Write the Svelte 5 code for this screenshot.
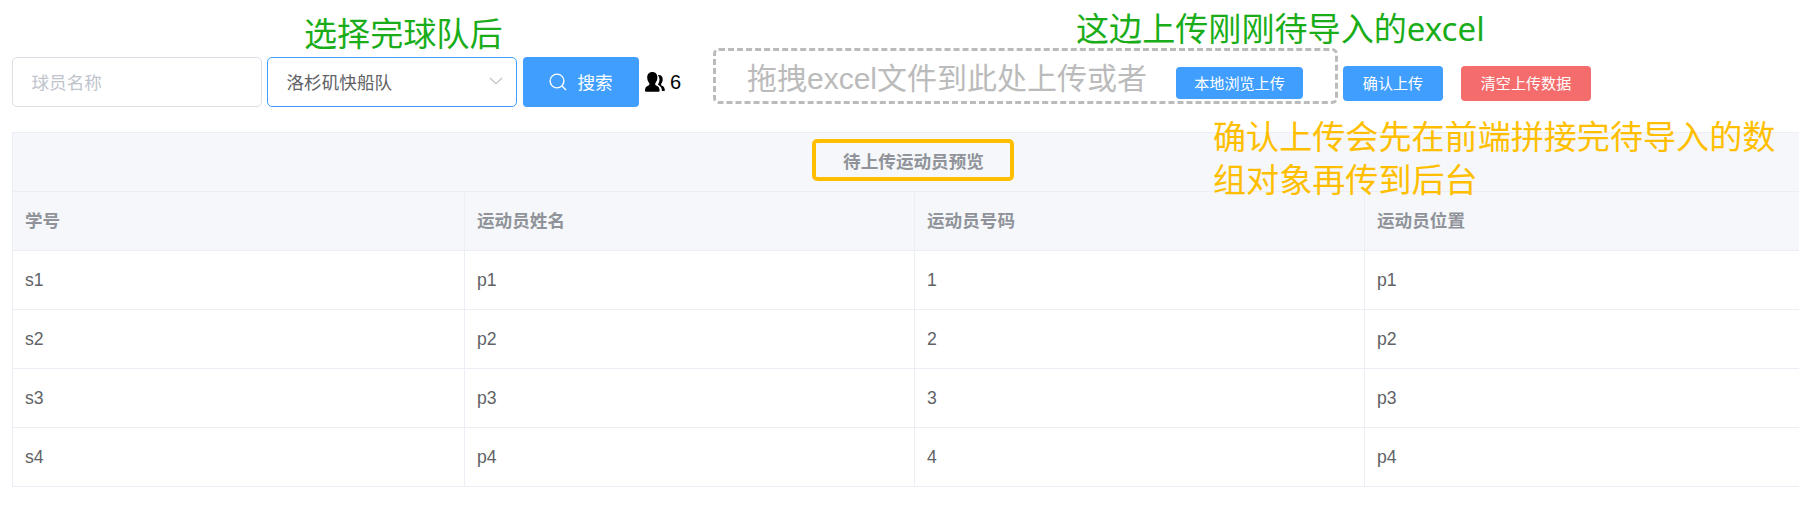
<script>
  const columns = ['学号', '运动员姓名', '运动员号码', '运动员位置'];
  const rows = [
    ['s1', 'p1', '1', 'p1'],
    ['s2', 'p2', '2', 'p2'],
    ['s3', 'p3', '3', 'p3'],
    ['s4', 'p4', '4', 'p4']
  ];
</script>

<main>
  <div class="toolbar">
    <div class="field placeholder"><span>球员名称</span></div>
    <div class="field select">
      <span>洛杉矶快船队</span>
      <svg width="14" height="8" viewBox="0 0 14 8"><path d="M1 1l6 5.700L13 1" fill="none" stroke="#c0c4cc" stroke-width="1.3" /></svg>
    </div>
    <button class="search">
      <svg width="18" height="18" viewBox="0 0 18 18" fill="none" stroke="#fff" stroke-width="1.4"><circle cx="8" cy="8" r="6.9" /><path d="M13 13l4 4" /></svg>
      <span>搜索</span>
    </button>
    <svg class="people" width="20" height="20" viewBox="0 0 20 20">
      <path d="M13 3.200c2.900-.5 4.700 1.400 4.700 4.300 0 1.900-.8 3.200-1.500 4.200-.4 1 0 1.500 1 2.100 2 1.100 2.600 2.300 2.600 5.200h-2.900c0-3-1-4.600-3.200-5.700-.7-.4-.8-.9-.4-1.600 1.600-2.600 1.700-6.200-.3-8.500z" />
      <path stroke="#fff" stroke-width="1" paint-order="stroke" d="M7.300 0c3.200 0 5.100 2.200 5.100 5.500 0 2.600-1 4.300-2.100 5.700-.5 1.200.1 1.900 1.300 2.500 2.200 1 3 2.300 3 4.900 0 .8-.3 1.200-1 1.200H1c-.7 0-1-.4-1-1.200 0-2.600.8-3.900 3-4.900 1.200-.6 1.800-1.300 1.300-2.500C3.200 9.800 2.200 8.100 2.200 5.500 2.200 2.200 4.100 0 7.300 0z" />
    </svg>
    <span class="count">6</span>
    <div class="drop">
      <span>拖拽excel文件到此处上传或者</span>
      <button class="small local">本地浏览上传</button>
    </div>
    <button class="small confirm">确认上传</button>
    <button class="small danger">清空上传数据</button>
  </div>

  <div class="table">
    <div class="title">待上传运动员预览</div>
    {#each columns as column}<div class="cell head">{column}</div>{/each}
    {#each rows as row}
      {#each row as value}<div class="cell">{value}</div>{/each}
    {/each}
  </div>

  <div class="note green pick">选择完球队后</div>
  <div class="note green upload">这边上传刚刚待导入的excel</div>
  <div class="note yellow">确认上传会先在前端拼接完待导入的数<br />组对象再传到后台</div>
  <div class="mark"></div>
</main>

<style>
  :global(body) { background: #fff; overflow: hidden; }
  main {
    position: relative;
    width: 1799px;
    height: 532px;
    overflow: hidden;
    box-sizing: border-box;
    padding: 48px 0 0 12px;
    font: 17.6px "Liberation Sans", "Noto Sans CJK SC", sans-serif;
    color: #606266;
  }
  .toolbar { display: flex; align-items: flex-start; height: 84px; white-space: nowrap; }
  .field {
    box-sizing: border-box;
    display: flex;
    align-items: center;
    justify-content: space-between;
    width: 250px;
    height: 50px;
    margin-top: 9px;
    padding: 0 13px 0 18.5px;
    border: 1px solid #dcdfe6;
    border-radius: 5px;
  }
  .field span, .search span { padding-bottom: 2px; }
  .placeholder { color: #c0c4cc; }
  .select { margin-left: 5px; border-color: #409eff; }
  .select svg { margin-top: -3px; }
  button {
    border: 0;
    padding: 0;
    border-radius: 4px;
    background: #409eff;
    color: #fff;
    font: inherit;
    white-space: nowrap;
  }
  .search {
    display: flex;
    align-items: center;
    justify-content: center;
    gap: 10px;
    width: 116px;
    height: 50px;
    margin: 9px 6px 0;
  }
  .people { flex: none; margin-top: 24px; fill: #000; }
  .count { margin: 22px 0 0 5px; width: 43px; font-size: 20px; line-height: 24px; color: #000; }
  .drop {
    box-sizing: border-box;
    display: flex;
    align-items: flex-start;
    width: 625px;
    height: 56px;
    padding-left: 31px;
    border: 3px dashed #bbb;
    border-radius: 6px;
    color: #bbb;
    font-size: 30px;
    line-height: 56px;
  }
  .drop span { width: 429px; }
  .small { flex: none; font-size: 15.1px; line-height: 35px; height: 35px; margin-top: 18px; }
  .local { width: 127px; height: 32px; line-height: 33px; margin-top: 16px; }
  .confirm { width: 100px; margin-left: 5px; }
  .danger { width: 130px; margin-left: 18px; background: #f56c6c; }
  .table {
    display: grid;
    grid-template-columns: 452px repeat(3, 450px);
    grid-auto-rows: 59px;
    width: 1802px;
    border: 1px solid #ebeef5;
    border-right: 0;
    border-bottom: 0;
  }
  .title, .cell {
    box-sizing: border-box;
    border-right: 1px solid #ebeef5;
    border-bottom: 1px solid #ebeef5;
    line-height: 58px;
  }
  .title { grid-column: 1 / -1; text-align: center; }
  .title, .head { background: #f5f7fa; color: #909399; font-weight: 700; }
  .cell { padding-left: 12px; }
  .note {
    position: absolute;
    font: 33.1px/43px "Noto Sans", "Noto Sans CJK SC", sans-serif;
    white-space: nowrap;
  }
  .green { color: #1aad19; }
  .yellow { left: 1213px; top: 115px; color: #ffbf00; }
  .pick { left: 304px; top: 12px; }
  .upload { left: 1076px; top: 7px; }
  .mark {
    position: absolute;
    left: 812px;
    top: 139px;
    width: 202px;
    height: 42px;
    box-sizing: border-box;
    border: 4px solid #ffbf00;
    border-radius: 5px;
  }
</style>
